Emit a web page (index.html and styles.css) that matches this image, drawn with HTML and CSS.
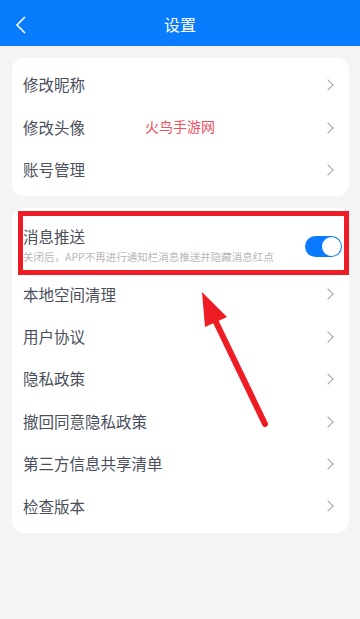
FILE: index.html
```html
<!DOCTYPE html>
<html lang="zh">
<head>
<meta charset="utf-8">
<link rel="stylesheet" href="styles.css">
</head>
<body>
<div class="page">
  <header class="topbar">
    <svg class="back" width="12" height="18" viewBox="0 0 12 18"><path d="M10 1 L2 9 L10 17" fill="none" stroke="#fff" stroke-width="1.6"/></svg>
    <div class="title">设置</div>
  </header>
  <main class="content">
    <section class="card card-a">
      <div class="row"><span class="label">修改昵称</span><span class="chev"></span></div>
      <div class="row"><span class="label">修改头像</span><span class="chev"></span></div>
      <div class="row"><span class="label">账号管理</span><span class="chev"></span></div>
      <div class="watermark">火鸟手游网</div>
    </section>
    <section class="card card-b">
      <div class="row row-push">
        <div class="push-text">
          <span class="label">消息推送</span>
          <span class="sub">关闭后，APP不再进行通知栏消息推送并隐藏消息红点</span>
        </div>
        <span class="toggle"><span class="knob"></span></span>
      </div>
      <div class="row"><span class="label">本地空间清理</span><span class="chev"></span></div>
      <div class="row"><span class="label">用户协议</span><span class="chev"></span></div>
      <div class="row"><span class="label">隐私政策</span><span class="chev"></span></div>
      <div class="row"><span class="label">撤回同意隐私政策</span><span class="chev"></span></div>
      <div class="row"><span class="label">第三方信息共享清单</span><span class="chev"></span></div>
      <div class="row"><span class="label">检查版本</span><span class="chev"></span></div>
      <div class="highlight"></div>
    </section>
  </main>
  <svg class="arrow" width="360" height="619" viewBox="0 0 360 619">
    <line x1="265" y1="424" x2="214" y2="318" stroke="#ee1c25" stroke-width="6" stroke-linecap="round"/>
    <polygon points="202,292 205,327 227,317" fill="#ee1c25"/>
  </svg>
</div>
</body>
</html>
```
FILE: styles.css
```css
* { box-sizing: border-box; }
html, body { margin: 0; padding: 0; }
body {
  font-family: "Noto Sans CJK SC", "Noto Sans", sans-serif;
  background: #f4f4f4;
}
.page {
  position: relative;
  width: 360px;
  height: 619px;
  overflow: hidden;
  background: #f4f4f4;
}
.topbar {
  position: relative;
  height: 46px;
  background: #087cfc;
  display: flex;
  align-items: center;
  justify-content: center;
}
.back {
  position: absolute;
  left: 15px;
  top: 16px;
}
.title {
  color: #fff;
  font-size: 16px;
  line-height: 1;
  margin-top: 1px;
}
.content {
  padding: 12px 11px 0 12px;
  display: flex;
  flex-direction: column;
  gap: 12px;
}
.card {
  position: relative;
  background: #fff;
  border-radius: 12px;
  display: flex;
  flex-direction: column;
}
.card-a { padding: 6px 0 5px; }
.card-b { padding: 6px 0 5px; }
.row {
  height: 42.4px;
  display: flex;
  align-items: center;
  justify-content: space-between;
  padding: 0 13px 0 11px;
}
.label {
  font-size: 15.5px;
  color: #4a4f5b;
  line-height: 1;
}
.chev {
  width: 8px;
  height: 8px;
  border-top: 1.4px solid #a3a3a3;
  border-right: 1.4px solid #a3a3a3;
  transform: rotate(45deg);
  margin-right: 4px;
}
.row-push {
  height: 59px;
  padding-right: 7px;
}
.push-text {
  display: flex;
  flex-direction: column;
  gap: 8px;
  padding-top: 4px;
}
.sub {
  font-size: 10.5px;
  color: #b7b7b7;
  line-height: 1;
  white-space: nowrap;
}
.toggle {
  position: relative;
  width: 37px;
  height: 21px;
  border-radius: 11px;
  background: #0a7bff;
  margin-top: 6px;
}
.knob {
  position: absolute;
  right: 1px;
  top: 1px;
  width: 19px;
  height: 19px;
  border-radius: 50%;
  background: #fff;
}
.watermark {
  position: absolute;
  left: 133px;
  top: 61px;
  font-size: 14px;
  color: #f0505f;
  line-height: 1;
}
.highlight {
  position: absolute;
  left: 6px;
  top: 3px;
  width: 331px;
  height: 64px;
  border: 5px solid #ee1c25;
}
.arrow {
  position: absolute;
  left: 0;
  top: 0;
  pointer-events: none;
}
```
